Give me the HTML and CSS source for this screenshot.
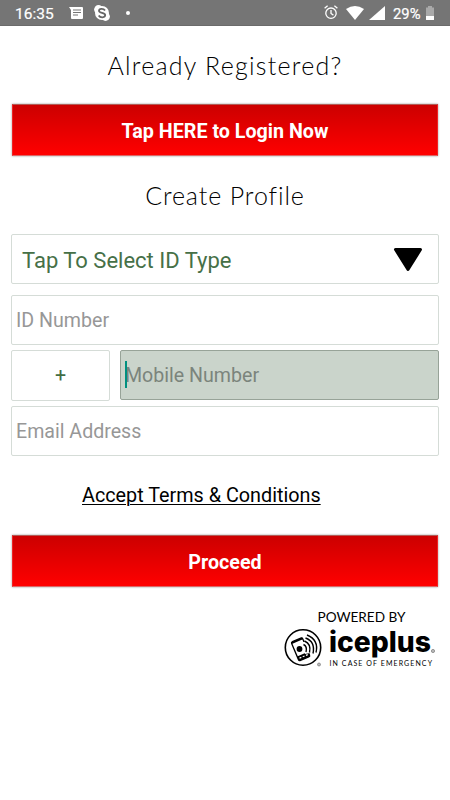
FILE: index.html
```html
<!DOCTYPE html>
<html lang="en">
<head>
<meta charset="utf-8">
<title>Create Profile</title>
<link rel="stylesheet" href="styles.css">
</head>
<body>
<header class="status">
  <span class="time">16:35</span>
  <svg class="message" width="14" height="12" viewBox="0 0 14 12"><path fill="#fff" d="M0 0h13q1 0 1 1v10q0 1-1 1H3q-1 0-1-1V3z"/><path stroke="#757575" stroke-width="1.200" d="M4 3h8M4 5.500h8M4 8h5"/></svg>
  <svg class="skype" width="16" height="16" viewBox="0 0 16 16"><circle cx="8" cy="8" r="7" fill="#fff"/><circle cx="4.500" cy="4.500" r="4.400" fill="#fff"/><circle cx="11.500" cy="11.500" r="4.400" fill="#fff"/><path d="M11 5.500C9.500 3 5 3.400 5 5.700c0 2.800 6.200 1.500 6.200 4.400 0 2.800-5 3-6.500.4" fill="none" stroke="#666" stroke-width="1.800"/></svg>
  <i class="dot"></i>
  <span class="grow"></span>
  <svg class="alarm" width="14" height="15" viewBox="0 0 14 15"><g fill="none" stroke="#fff" stroke-width="1.300"><circle cx="7" cy="8.200" r="5.200"/><path d="M7 5v3.500l2.400 1.600M.6 3.300 3.600.8M13.400 3.300 10.400.8"/></g></svg>
  <svg class="wifi" width="18" height="14" viewBox="0 0 18 14"><path fill="#fff" d="M0 3q9-6 18 0L9 14z"/></svg>
  <svg class="signal" width="16" height="14" viewBox="0 0 16 14"><path fill="#fff" d="M16 0v14H0z"/></svg>
  <span class="percent">29%</span>
  <svg class="battery" width="8" height="14" viewBox="0 0 8 14"><path fill="#a9a9a9" d="M2 0h4v1.500h2V10H0V1.500h2z"/><path fill="#fff" d="M0 10h8v3.500q0 .5-.5.5h-7q-.5 0-.5-.5z"/></svg>
</header>
<main>
  <h1 class="heading registered">Already Registered?</h1>
  <button class="action login">Tap HERE to Login Now</button>
  <h2 class="heading create">Create Profile</h2>
  <div class="field select"><span>Tap To Select ID Type</span><svg width="30" height="24" viewBox="0 0 30 24"><path d="M2.500 1.500h25L15 21.500z" stroke="#000" stroke-width="3" stroke-linejoin="round"/></svg></div>
  <div class="field idnumber">ID Number</div>
  <div class="phone">
    <div class="field code">+</div>
    <div class="field mobile"><i class="caret"></i>Mobile Number</div>
  </div>
  <div class="field email">Email Address</div>
  <a class="terms">Accept Terms &amp; Conditions</a>
  <button class="action proceed">Proceed</button>
  <svg class="brand" width="155" height="65" viewBox="0 0 155 65">
    <text class="powered" x="34.500" y="14.300" textLength="88" lengthAdjust="spacingAndGlyphs">POWERED BY</text>
    <circle cx="20" cy="39.500" r="17.700" fill="none" stroke="#000" stroke-width="1.600"/>
    <g transform="rotate(-23 17.500 41)"><rect x="11.500" y="31" width="12" height="20.500" rx="1.500" fill="#fff" stroke="#000" stroke-width="1.300"/><path d="M11.500 31h12v2h-12zM11.500 46.500h12v5h-12z"/><path d="M13 49h2M16.500 49h2M20 49h2" stroke="#fff" stroke-width="1.200"/></g>
    <path d="M19 34l5 0 3 11-5 1z" fill="#fff"/>
    <circle cx="16.500" cy="41" r="2.900"/>
    <path d="M20.500 36.500q4 2 2.500 7.500M21.500 33q7 3 5 11.500M22.500 30q10 3.500 7.500 15.500M24 27q12 5 9 17.500" fill="none" stroke="#000" stroke-width="1.400"/>
    <circle cx="36" cy="56.500" r="1.500" fill="#bbb" stroke="#777" stroke-width=".7"/>
    <text class="name" x="46" y="44.300" textLength="102" lengthAdjust="spacingAndGlyphs">iceplus</text>
    <circle cx="150" cy="43" r="1.600" fill="#bbb" stroke="#777" stroke-width=".7"/>
    <text class="tagline" x="46.500" y="57.700" textLength="102.500" lengthAdjust="spacing">IN CASE OF EMERGENCY</text>
  </svg>
</main>
</body>
</html>
```
FILE: styles.css
```css
* { box-sizing: border-box; }
body { margin: 0; height: 800px; background: #fff; font-family: Roboto, sans-serif; color: #000; overflow: hidden; }
svg { display: block; flex: none; }
.status { height: 26px; display: flex; align-items: center; background: #757575; color: #fff; padding: 0 16px 0 15px; border-bottom: 1px solid #6b6b6b; }
.time { width: 54px; font-size: 15.5px; padding-top: 2px; -webkit-text-stroke: .2px #fff; }
.message { margin-top: 1px; }
.skype { margin-left: 11px; margin-top: 1px; }
.dot { width: 4px; height: 4px; border-radius: 50%; background: #fff; margin-left: 16px; margin-top: 1px; }
.grow { flex: 1; }
.wifi { margin-left: 8px; }
.signal { margin-left: 5px; }
.percent { margin-left: 8px; width: 29px; font-size: 14.8px; padding-top: 2px; -webkit-text-stroke: .2px #fff; }
.battery { margin-left: 4px; margin-top: 1px; }
main { padding: 0 11px; display: flex; flex-direction: column; }
.heading { margin: 0; font-family: Lato, sans-serif; font-weight: 300; font-size: 25px; line-height: 30px; text-align: center; white-space: nowrap; }
.registered { margin-top: 24px; letter-spacing: 1.25px; }
.create { margin-top: 24px; letter-spacing: .9px; }
.action { height: 52px; margin: 0 1px; padding: 2px 0 0; border: 1px solid; border-color: #b35b55 #e22 #d66 #e22; background: linear-gradient(#c00, #f00); box-shadow: 0 0 2px #0006; color: #fff; font: 700 19.7px Roboto, sans-serif; }
.login { margin-top: 24px; }
.field { height: 50px; border: 1px solid #d5dcd7; border-radius: 2px; background: #fff; display: flex; align-items: center; padding: 0 4px; font-size: 19.6px; color: #979797; white-space: nowrap; }
.select { margin-top: 24px; padding: 2px 15px 0 10px; font-size: 22px; color: #467047; justify-content: space-between; }
.idnumber { margin-top: 11px; }
.phone { display: flex; gap: 10px; margin-top: 5px; align-items: flex-start; }
.code { width: 99px; height: 51px; justify-content: center; color: #426c43; }
.mobile { position: relative; flex: 1; background: #cad4cb; border-color: #97a398; color: #7b847c; }
.caret { position: absolute; left: 4px; top: 10px; width: 2px; height: 27px; background: #009080; }
.email { margin-top: 5px; }
.terms { align-self: flex-start; margin: 27px 0 0 71px; font-size: 19.8px; line-height: 26px; text-decoration: underline; text-decoration-thickness: 1px; text-underline-offset: 2px; white-space: nowrap; }
.proceed { margin-top: 26px; }
.brand { align-self: flex-end; margin: 21px 1px 0 0; }
.powered { font: 400 14px Lato, sans-serif; }
.name { font: 800 28px Inter, sans-serif; }
.tagline { font: 400 7px Lato, sans-serif; }
```
